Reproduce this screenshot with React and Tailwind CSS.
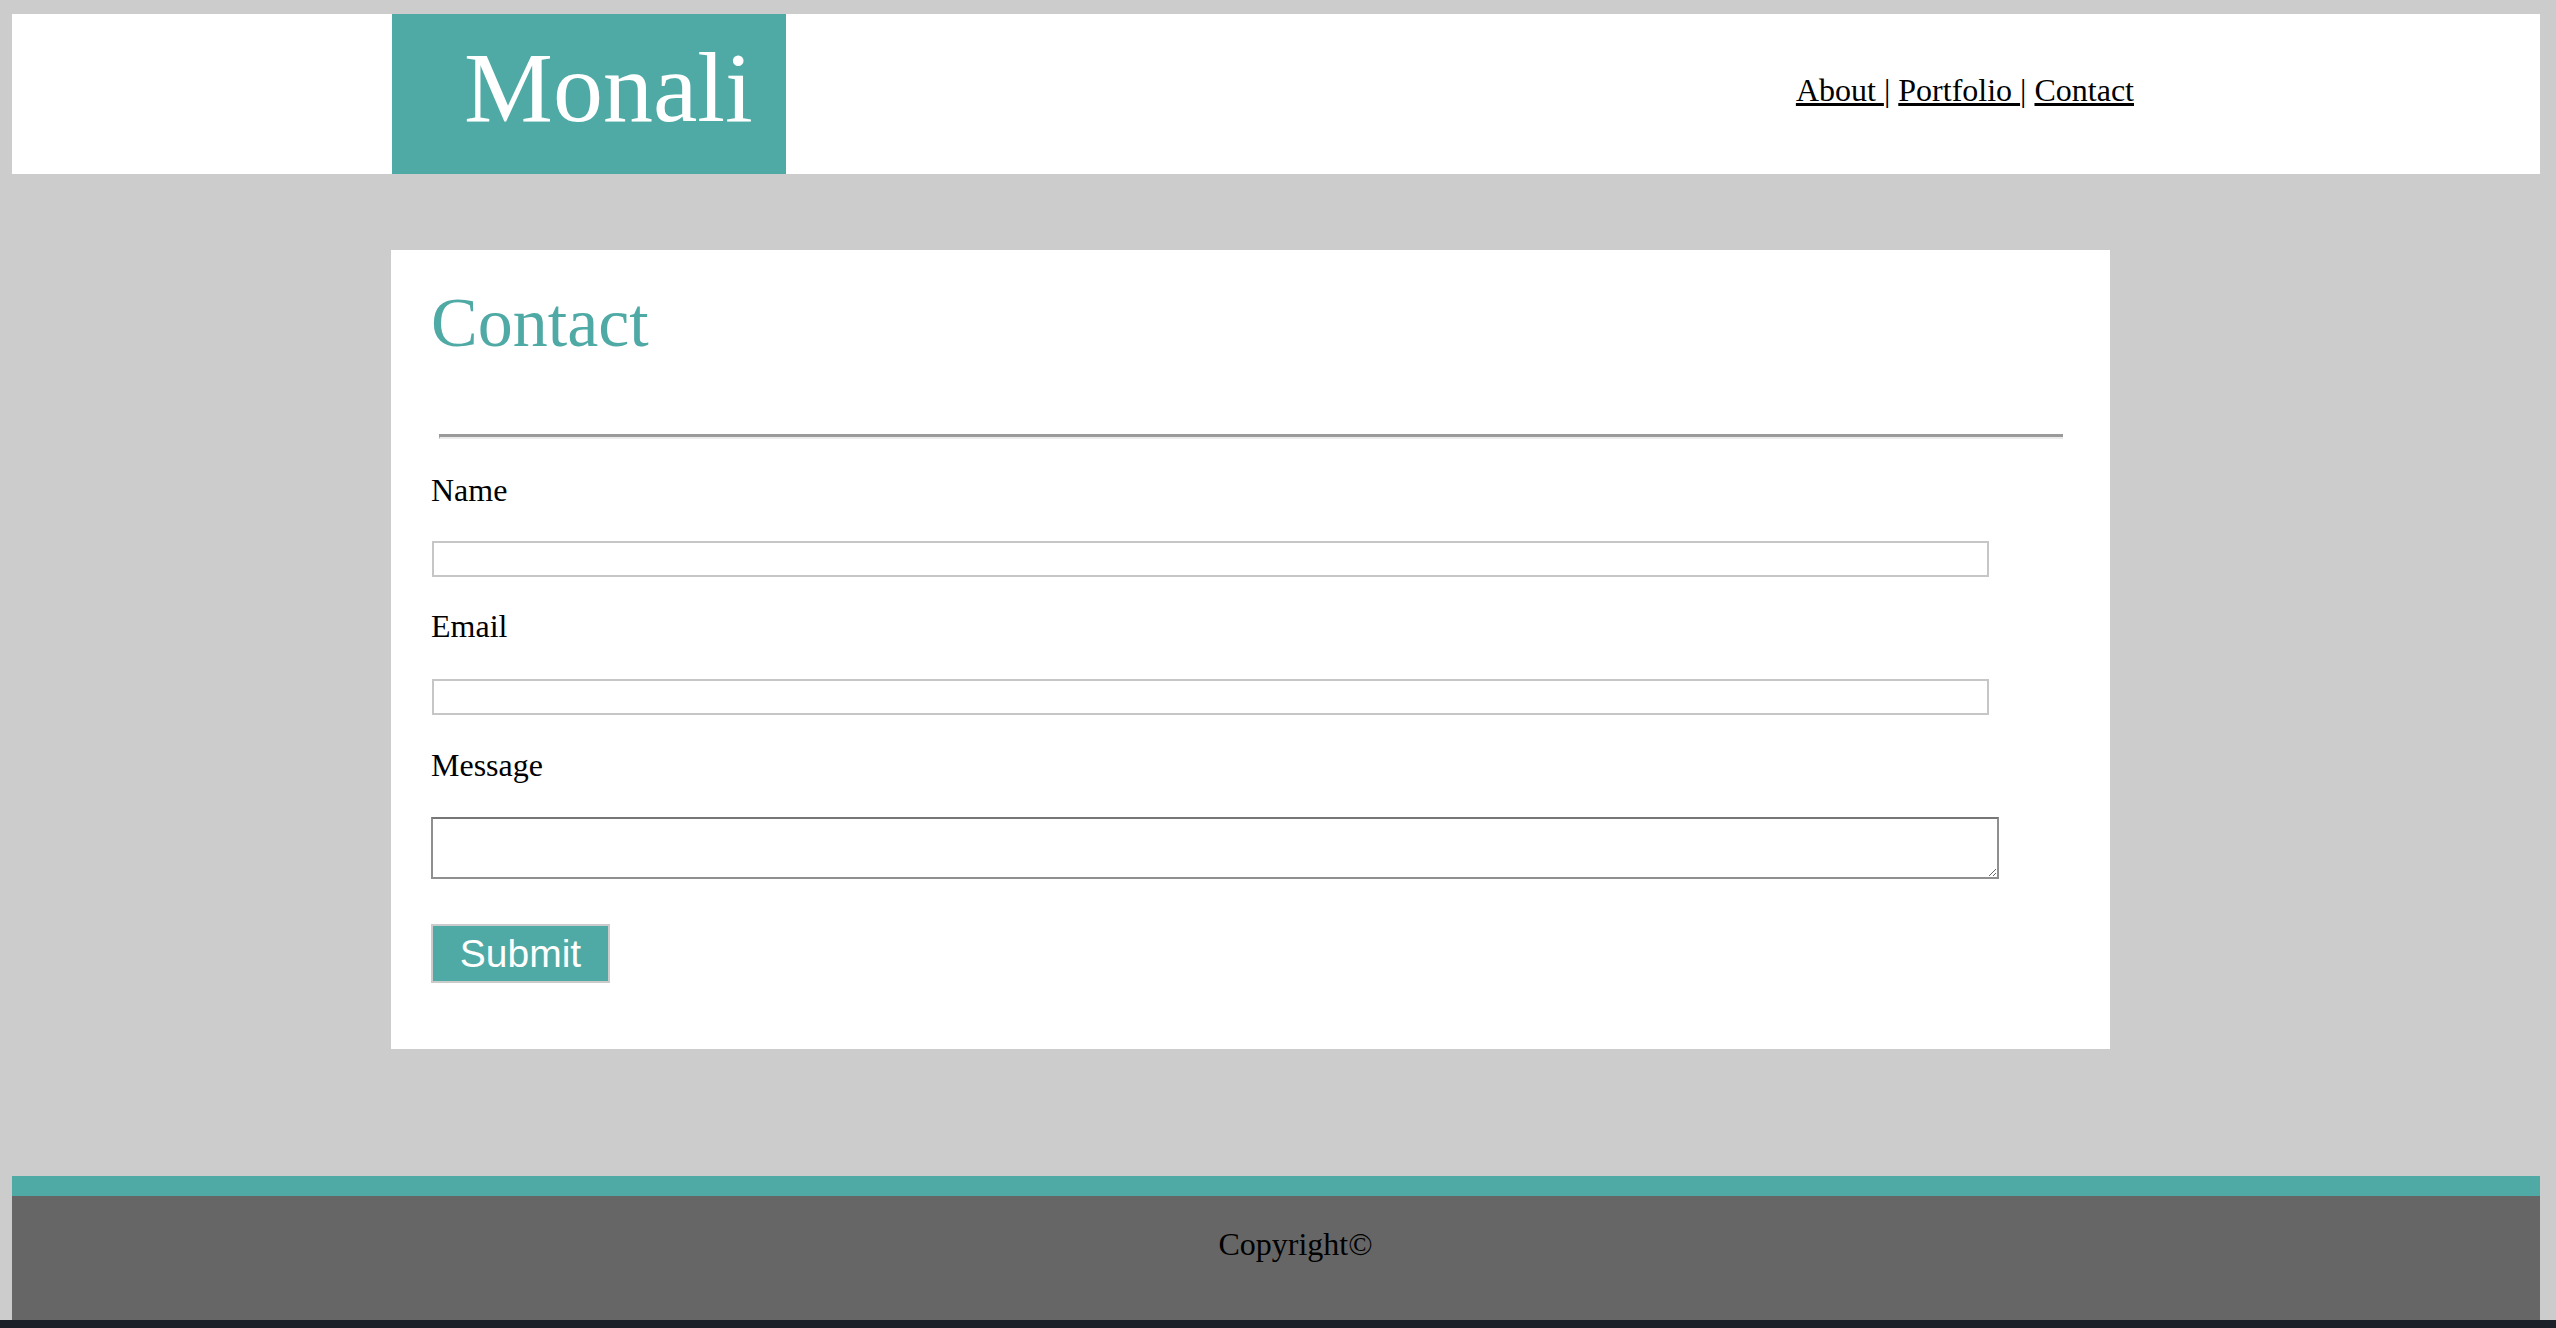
import React from 'react';

const teal = 'bg-[#4faaa6]';

function Header() {
  return (
    <header className="h-[160px] bg-white flex">
      <div className={`ml-[380px] w-[394px] ${teal} pl-[72px] pt-[24px]`}>
        <h1 className="text-[100px] leading-[100px] font-normal text-white">Monali</h1>
      </div>
      <nav className="ml-auto mr-[406px] pt-[58px] text-[32px] leading-[36px] text-black whitespace-pre">
        <a href="#about" className="underline">About </a>| <a href="#portfolio" className="underline">Portfolio </a>| <a href="#contact" className="underline">Contact</a>
      </nav>
    </header>
  );
}

function Field({ label, top, inputTop }) {
  return (
    <>
      <label className="block text-[32px] leading-[36px] text-black" style={{ marginTop: top }}>{label}</label>
      <input
        type="text"
        className="block ml-[1px] w-[1557px] h-[36px] border-2 border-[#c6c6c6] bg-white outline-none"
        style={{ marginTop: inputTop }}
      />
    </>
  );
}

function ContactCard() {
  return (
    <section className="ml-[379px] mt-[76px] w-[1719px] bg-white pl-[40px] pt-[38px] pb-[66px]">
      <h2 className="text-[70px] leading-[70px] font-normal text-[#4faaa6]">Contact</h2>
      <div className="mt-[76px] ml-[8px] w-[1624px] border-t-[3px] border-b-2 border-t-[#9a9a9a] border-b-[#ececec] border-l border-l-[#9a9a9a]" />
      <form onSubmit={e => e.preventDefault()}>
        <Field label="Name" top={33} inputTop={33} />
        <Field label="Email" top={31} inputTop={35} />
        <label className="block mt-[32px] text-[32px] leading-[36px] text-black">Message</label>
        <textarea className="block mt-[34px] w-[1568px] h-[62px] border-2 border-[#8f8f8f] border-t-[#767676] bg-white outline-none" />
        <button
          type="submit"
          className={`block mt-[45px] w-[179px] h-[59px] border-2 border-[#cbcbcb] ${teal} text-white text-[39px] leading-[44px] font-['Liberation_Sans',Arial,sans-serif]`}
        >
          Submit
        </button>
      </form>
    </section>
  );
}

function Footer() {
  return (
    <footer className="mt-[127px] h-[144px] border-t-[20px] border-t-[#4faaa6] bg-[#666666] pt-[30px] pl-[39px] text-center text-[32px] leading-[36px] text-black">
      Copyright©
    </footer>
  );
}

export default function App() {
  return (
    <div className="min-h-[1328px] bg-[#cccccc] flex flex-col font-['Liberation_Serif','Times_New_Roman',serif]">
      <div className="pl-[12px] pr-[16px] pt-[14px]">
        <Header />
        <ContactCard />
        <Footer />
      </div>
      <div className="h-[8px] bg-[#1c2029]" />
    </div>
  );
}
